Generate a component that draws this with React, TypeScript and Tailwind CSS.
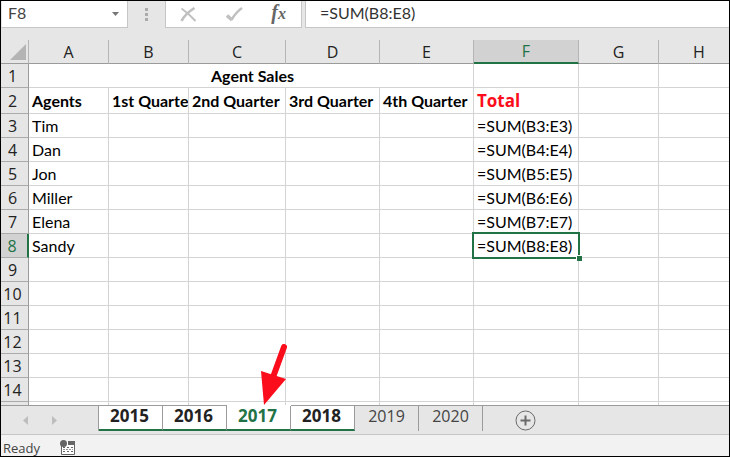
import { useState } from 'react';
import clsx from 'clsx';

const columns = [
  { name: 'A', width: 'w-20' },
  { name: 'B', width: 'w-20' },
  { name: 'C', width: 'w-[97px]' },
  { name: 'D', width: 'w-[94px]' },
  { name: 'E', width: 'w-[94px]' },
  { name: 'F', width: 'w-[105px]' },
  { name: 'G', width: 'w-20' },
  { name: 'H', width: '' },
];

const headings = ['Agents', '1st Quarter', '2nd Quarter', '3rd Quarter', '4th Quarter', 'Total', '', ''];
const agents = ['Tim', 'Dan', 'Jon', 'Miller', 'Elena', 'Sandy'];
const sheets = ['2015', '2016', '2017', '2018', '2019', '2020'];
const grouped = ['2015', '2016', '2017', '2018'];

const lastRow = 14;
const selectedRow = 8;

function FormulaBar() {
  const [formula, setFormula] = useState('=SUM(B8:E8)');

  return (
    <div className="flex h-[27px] bg-[#e6e6e6]">
      <div className="flex w-[127px] border-r border-b border-l border-[#c6c6c6] border-l-[#e6e6e6] bg-white">
        <input
          aria-label="Name box"
          defaultValue="F8"
          className="w-full min-w-0 pb-0.5 pl-1.5 text-base text-[#444] outline-none font-['Lato','Liberation_Sans',sans-serif]"
        />
        <button aria-label="Named ranges" className="flex w-6 shrink-0 items-center justify-center">
          <svg width="7" height="4" viewBox="0 0 7 4" fill="#777">
            <path d="M0 0h7L3.5 4z" />
          </svg>
        </button>
      </div>
      <div className="flex w-[37px] items-center justify-center">
        <svg width="3" height="13" viewBox="0 0 3 13" fill="#ababab">
          <path d="M0 0h3v3H0zM0 5h3v3H0zM0 10h3v3H0z" />
        </svg>
      </div>
      <div className="flex w-[137px] items-center justify-between border-x border-b border-[#c6c6c6] bg-white pr-[15px] pl-3.5">
        <button aria-label="Cancel">
          <svg width="17" height="15" viewBox="0 0 17 15" fill="none" stroke="#c0c0c0">
            <path d="M1.500 1.500C5 4 10 8 15.500 14" strokeWidth="2" />
            <path d="M14.500 1C9 4.500 4 9 1.500 14" strokeWidth="2.600" />
          </svg>
        </button>
        <button aria-label="Enter">
          <svg width="17" height="15" viewBox="0 0 17 15" fill="none" stroke="#c0c0c0">
            <path d="M1 8.500L6 13" strokeWidth="3.400" />
            <path d="M5.500 13C8 8.500 11.500 4 16 1" strokeWidth="2.400" />
          </svg>
        </button>
        <button
          aria-label="Insert function"
          className="text-xl leading-5 font-bold text-[#666] italic font-['Liberation_Serif',serif]"
        >
          f<span className="text-base">x</span>
        </button>
      </div>
      <div className="w-[3px]" />
      <input
        aria-label="Formula"
        value={formula}
        onChange={e => setFormula(e.target.value)}
        className="min-w-0 flex-1 border-b border-l border-[#c6c6c6] bg-white pb-0.5 pl-3.5 text-base text-[#333] outline-none font-['Lato','Liberation_Sans',sans-serif]"
      />
    </div>
  );
}

function RowHeader({ row }: { row: number }) {
  const active = row === selectedRow;
  return (
    <th
      scope="row"
      className={clsx(
        "border-b border-b-[#ababab] p-0 pr-1 text-center text-base leading-5 font-normal font-['Open_Sans',sans-serif]",
        active
          ? 'border-r-2 border-r-[#217346] bg-[#d2d2d2] text-[#217346]'
          : 'border-r border-r-[#9b9b9b] bg-[#e6e6e6] text-[#222]',
      )}
    >
      {row}
    </th>
  );
}

function Selection() {
  return (
    <>
      <span className="pointer-events-none absolute -inset-0.5 border-2 border-[#217346]" />
      <span className="absolute -right-1 -bottom-1 size-1.5 cursor-crosshair border-t border-l border-white bg-[#217346]" />
    </>
  );
}

function cellText(row: number, col: string) {
  const agent = agents[row - 3];
  if (!agent) return '';
  if (col === 'A') return agent;
  if (col === 'F') return `=SUM(B${row}:E${row})`;
  return '';
}

function Grid() {
  const rows = Array.from({ length: lastRow - 2 }, (_, i) => i + 3);

  return (
    <div className="flex-1 overflow-hidden bg-white">
      <table className="w-full min-w-[738px] table-fixed border-separate border-spacing-0 text-base leading-5 text-black font-['Lato','Liberation_Sans',sans-serif]">
        <colgroup>
          <col className="w-7" />
          {columns.map(c => (
            <col key={c.name} className={c.width} />
          ))}
        </colgroup>
        <thead>
          <tr className="h-6 bg-[#e6e6e6]">
            <th className="border-r border-b border-r-[#b5b5b5] border-b-[#9b9b9b] p-0">
              <button aria-label="Select all" className="flex w-full justify-end pr-0.5">
                <svg width="16" height="16" viewBox="0 0 16 16" fill="#b4b4b4">
                  <path d="M16 0v16H0z" />
                </svg>
              </button>
            </th>
            {columns.map(c => (
              <th
                key={c.name}
                scope="col"
                className={clsx(
                  "border-r border-r-[#b5b5b5] p-0 text-center text-base leading-5 font-normal last:border-r-0 font-['Open_Sans',sans-serif]",
                  c.name === 'F'
                    ? 'border-b-2 border-b-[#217346] bg-[#d2d2d2] text-[#217346]'
                    : 'border-b border-b-[#9b9b9b] text-[#222]',
                )}
              >
                {c.name}
              </th>
            ))}
          </tr>
        </thead>
        <tbody className="[&_td]:border-r [&_td]:border-b [&_td]:border-[#d4d4d4] [&_td]:py-0 [&_td]:pr-0 [&_td]:pl-[3px] [&_td:last-child]:border-r-0">
          <tr className="h-6">
            <RowHeader row={1} />
            <td colSpan={5} className="text-center font-bold">Agent Sales</td>
            <td />
            <td />
            <td />
          </tr>
          <tr className="h-[26px]">
            <RowHeader row={2} />
            {headings.map((h, i) => (
              <td
                key={i}
                className={clsx(
                  'overflow-hidden font-bold whitespace-nowrap',
                  h === 'Total' && "text-[17px] leading-5 text-[#fb0d1b] font-['Open_Sans',sans-serif]",
                )}
              >
                {h}
              </td>
            ))}
          </tr>
          {rows.map(row => (
            <tr key={row} className="h-6">
              <RowHeader row={row} />
              {columns.map(c => {
                const selected = row === selectedRow && c.name === 'F';
                return (
                  <td key={c.name} className={clsx('whitespace-nowrap', selected && 'relative z-10')}>
                    {cellText(row, c.name)}
                    {selected && <Selection />}
                  </td>
                );
              })}
            </tr>
          ))}
          <tr className="h-[3px] [&>td]:border-b-0">
            <th className="border-r border-[#9b9b9b] bg-[#e6e6e6] p-0" />
            {columns.map(c => (
              <td key={c.name} />
            ))}
          </tr>
        </tbody>
      </table>
    </div>
  );
}

function Pointer() {
  return (
    <svg
      className="pointer-events-none absolute bottom-full left-[30px]"
      width="30"
      height="62"
      viewBox="0 0 30 62"
      fill="#fb0d1b"
    >
      <path d="M27 3L15 36" stroke="#fb0d1b" strokeWidth="6" strokeLinecap="round" />
      <path d="M4 27L29 35L7 61z" />
    </svg>
  );
}

function SheetTabs() {
  const [active, setActive] = useState('2017');

  return (
    <div className="flex h-[30px] items-start border-b border-[#c6c6c6] bg-[#e6e6e6]">
      <div className="flex h-full w-[97px] items-center gap-6 border-t border-[#9b9b9b] pl-[22px]">
        <button aria-label="Previous sheet">
          <svg width="5" height="9" viewBox="0 0 5 9" fill="#bdbdbd">
            <path d="M5 0v9L0 4.500z" />
          </svg>
        </button>
        <button aria-label="Next sheet">
          <svg width="5" height="9" viewBox="0 0 5 9" fill="#bdbdbd">
            <path d="M0 0v9l5-4.500z" />
          </svg>
        </button>
      </div>
      <div className="flex border-l border-[#9b9b9b]">
        {sheets.map(name => (
          <div
            key={name}
            className={clsx('relative w-16 border-t', name === active ? 'border-white bg-white' : 'border-[#9b9b9b]')}
          >
            <button
              onClick={() => setActive(name)}
              className={clsx(
                "block h-[25px] w-full border-r border-[#9b9b9b] leading-5 font-['Open_Sans',sans-serif]",
                grouped.includes(name)
                  ? 'border-b-2 border-b-[#217346] bg-white pr-0.5 pb-[3px] text-[17px] font-bold'
                  : 'pb-[5px] text-base',
                name === active ? 'text-[#217346]' : grouped.includes(name) ? 'text-[#222]' : 'text-[#444]',
              )}
            >
              {name}
            </button>
            {name === active && <Pointer />}
          </div>
        ))}
      </div>
      <div className="flex h-full flex-1 items-center border-t border-[#9b9b9b] pl-8">
        <button aria-label="New sheet">
          <svg width="21" height="21" viewBox="0 0 21 21" fill="none" stroke="#6a6a6a">
            <circle cx="10.500" cy="10.500" r="9.500" />
            <path d="M10.500 5.500v10M5.500 10.500h10" strokeWidth="2" />
          </svg>
        </button>
      </div>
    </div>
  );
}

function StatusBar() {
  return (
    <div className="flex h-[21px] items-center gap-5 bg-[#f2f2f2] pl-0.5 text-[13px] leading-4 text-[#444] font-['Open_Sans',sans-serif]">
      <span className="pt-1">Ready</span>
      <button aria-label="Record macro" className="pt-1">
        <svg width="15" height="15" viewBox="0 0 15 15">
          <path d="M1.500 5v9.500h13V1.500H8" fill="#fff" stroke="#666" />
          <path d="M8 1h7v4H8z" fill="#666" />
          <path d="M3 7.500h10M3 11.500h10" stroke="#666" strokeDasharray="2 2" />
          <path d="M3 9.500h10" stroke="#999" strokeDasharray="2 1" />
          <circle cx="3.500" cy="3.500" r="3.500" fill="#666" />
        </svg>
      </button>
    </div>
  );
}

export default function App() {
  return (
    <div className="flex min-h-screen flex-col border border-black bg-[#e6e6e6]">
      <FormulaBar />
      <div className="h-3" />
      <Grid />
      <SheetTabs />
      <StatusBar />
    </div>
  );
}
